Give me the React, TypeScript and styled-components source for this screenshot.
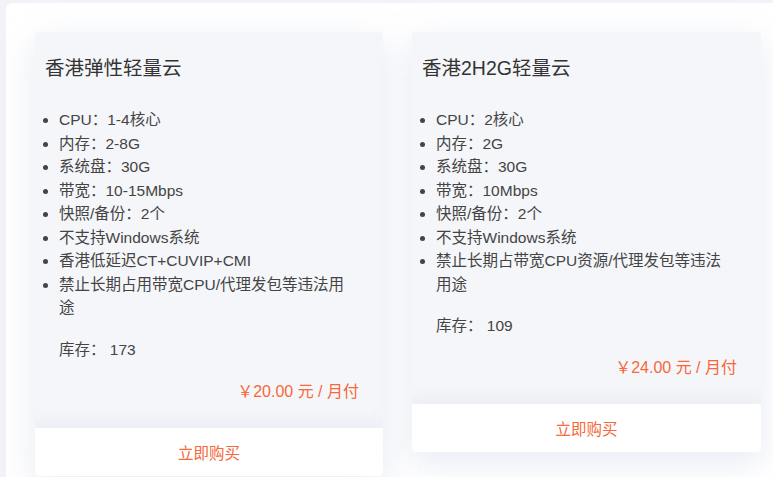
import React from "react";
import styled, { createGlobalStyle } from "styled-components";

const GlobalStyle = createGlobalStyle`
  html, body {
    margin: 0;
    padding: 0;
    background: #f2f3f8;
    font-family: "Liberation Sans", "Noto Sans CJK SC", sans-serif;
    overflow: hidden;
  }
`;

const Panel = styled.main`
  margin: 3px 0 0 6px;
  padding: 29px;
  background: #ffffff;
  border-radius: 6px 0 0 0;
  min-height: 520px;
`;

const Grid = styled.div`
  display: grid;
  grid-template-columns: 348px 349px;
  gap: 29px;
  align-items: start;
`;

const Card = styled.section`
  background: #f5f6f9;
  border-radius: 4px;
  box-shadow: 0 10px 34px rgba(186, 196, 222, 0.35);
  overflow: hidden;
`;

const Body = styled.div`
  padding: 22px 31px 24px 10px;
`;

const Title = styled.h3`
  margin: 0;
  font-size: 19.5px;
  font-weight: 400;
  line-height: 28px;
  color: #333;
`;

const Specs = styled.ul`
  margin: 26px 0 0;
  padding-left: 14px;
  font-size: 15.5px;
  line-height: 23.5px;
  color: #444;
`;

const Stock = styled.div`
  margin-top: 18px;
  padding-left: 14px;
  font-size: 15.5px;
  line-height: 24px;
  color: #444;
`;

const Price = styled.div`
  margin-top: 18px;
  margin-right: -7px;
  text-align: right;
  font-size: 16px;
  line-height: 24px;
  color: #f5693a;
`;

const BuyButton = styled.button`
  display: block;
  width: 100%;
  height: 48px;
  border: 0;
  background: #ffffff;
  box-shadow: 0 -6px 14px rgba(186, 196, 222, 0.18);
  font-family: inherit;
  font-size: 15.5px;
  color: #f5693a;
  cursor: pointer;
`;

type Plan = {
  name: string;
  specs: string[];
  stock: number;
  price: string;
};

const plans: Plan[] = [
  {
    name: "香港弹性轻量云",
    specs: [
      "CPU：1-4核心",
      "内存：2-8G",
      "系统盘：30G",
      "带宽：10-15Mbps",
      "快照/备份：2个",
      "不支持Windows系统",
      "香港低延迟CT+CUVIP+CMI",
      "禁止长期占用带宽CPU/代理发包等违法用途",
    ],
    stock: 173,
    price: "20.00",
  },
  {
    name: "香港2H2G轻量云",
    specs: [
      "CPU：2核心",
      "内存：2G",
      "系统盘：30G",
      "带宽：10Mbps",
      "快照/备份：2个",
      "不支持Windows系统",
      "禁止长期占带宽CPU资源/代理发包等违法用途",
    ],
    stock: 109,
    price: "24.00",
  },
];

export default function App() {
  return (
    <>
      <GlobalStyle />
      <Panel>
        <Grid>
          {plans.map((plan) => (
            <Card key={plan.name}>
              <Body>
                <Title>{plan.name}</Title>
                <Specs>
                  {plan.specs.map((s) => (
                    <li key={s}>{s}</li>
                  ))}
                </Specs>
                <Stock>库存： {plan.stock}</Stock>
                <Price>￥{plan.price} 元 / 月付</Price>
              </Body>
              <BuyButton>立即购买</BuyButton>
            </Card>
          ))}
        </Grid>
      </Panel>
    </>
  );
}
